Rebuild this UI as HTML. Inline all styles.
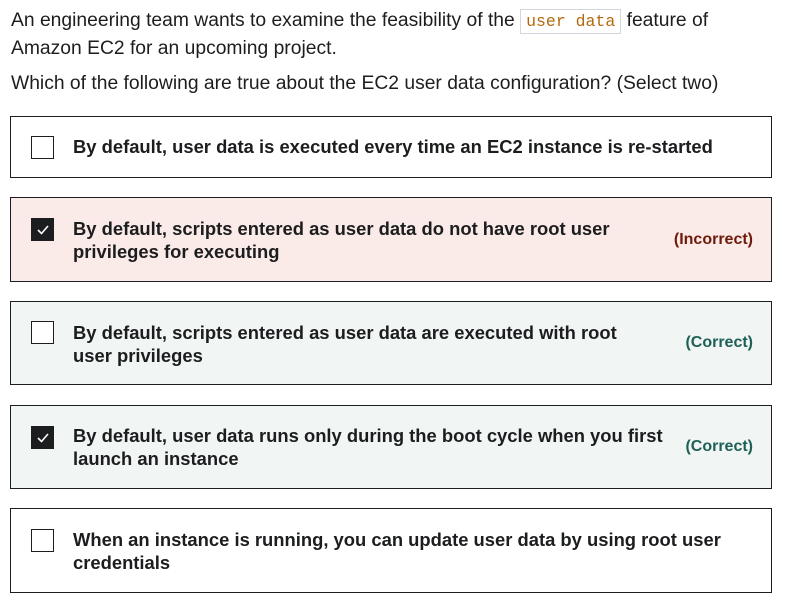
<!DOCTYPE html>
<html><head><style>
body{margin:0;background:#fff;font-family:"Liberation Sans",sans-serif;color:#1c1d1f;width:785px;height:607px;overflow:hidden}
.p{position:absolute;left:11px;font-size:19.3px;line-height:27px;margin:0;white-space:nowrap}
code{font-family:"Liberation Mono",monospace;font-size:16.5px;color:#b4690e;border:1px solid #d1d7dc;background:#fff;padding:2px 5px;}
.box{position:absolute;left:10px;width:760px;border:1px solid #1c1d1f;box-sizing:content-box}
.cb{position:absolute;left:20px;width:21px;height:21px;border:1px solid #1c1d1f;background:#fff}
.cb.on{background:#1c1d1f}
.cb.on svg{position:absolute;left:4px;top:5px}
.t{position:absolute;left:62px;font-size:18.4px;font-weight:bold;line-height:23px;width:610px;white-space:nowrap}
.l{position:absolute;right:18px;font-size:16px;font-weight:bold}
.inc{background:#fbebe8}.cor{background:#f1f5f4}
</style></head><body>
<p class="p" style="top:7px">An engineering team wants to examine the feasibility of the <code>user data</code> feature of<br>Amazon EC2 for an upcoming project.</p>
<p class="p" style="top:70px">Which of the following are true about the EC2 user data configuration? (Select two)</p>

<div class="box" style="top:116px;height:60px"><div class="cb" style="top:19px"></div><div class="t" style="top:18px">By default, user data is executed every time an EC2 instance is re-started</div></div>

<div class="box inc" style="top:197px;height:83px"><div class="cb on" style="top:20px"><svg width="14" height="12" viewBox="0 0 14 12"><path d="M2 6l3.5 3.5L12 2" stroke="#fff" stroke-width="1.6" fill="none"/></svg></div><div class="t" style="top:19px">By default, scripts entered as user data do not have root user<br>privileges for executing</div><div class="l" style="top:33px;color:#6e1a0b">(Incorrect)</div></div>

<div class="box cor" style="top:301px;height:82px"><div class="cb" style="top:19px"></div><div class="t" style="top:19px">By default, scripts entered as user data are executed with root<br>user privileges</div><div class="l" style="top:32px;color:#1e6055">(Correct)</div></div>

<div class="box cor" style="top:405px;height:82px"><div class="cb on" style="top:20px"><svg width="14" height="12" viewBox="0 0 14 12"><path d="M2 6l3.5 3.5L12 2" stroke="#fff" stroke-width="1.6" fill="none"/></svg></div><div class="t" style="top:18px">By default, user data runs only during the boot cycle when you first<br>launch an instance</div><div class="l" style="top:32px;color:#1e6055">(Correct)</div></div>

<div class="box" style="top:508px;height:83px"><div class="cb" style="top:20px"></div><div class="t" style="top:19px">When an instance is running, you can update user data by using root user<br>credentials</div></div>
</body></html>
